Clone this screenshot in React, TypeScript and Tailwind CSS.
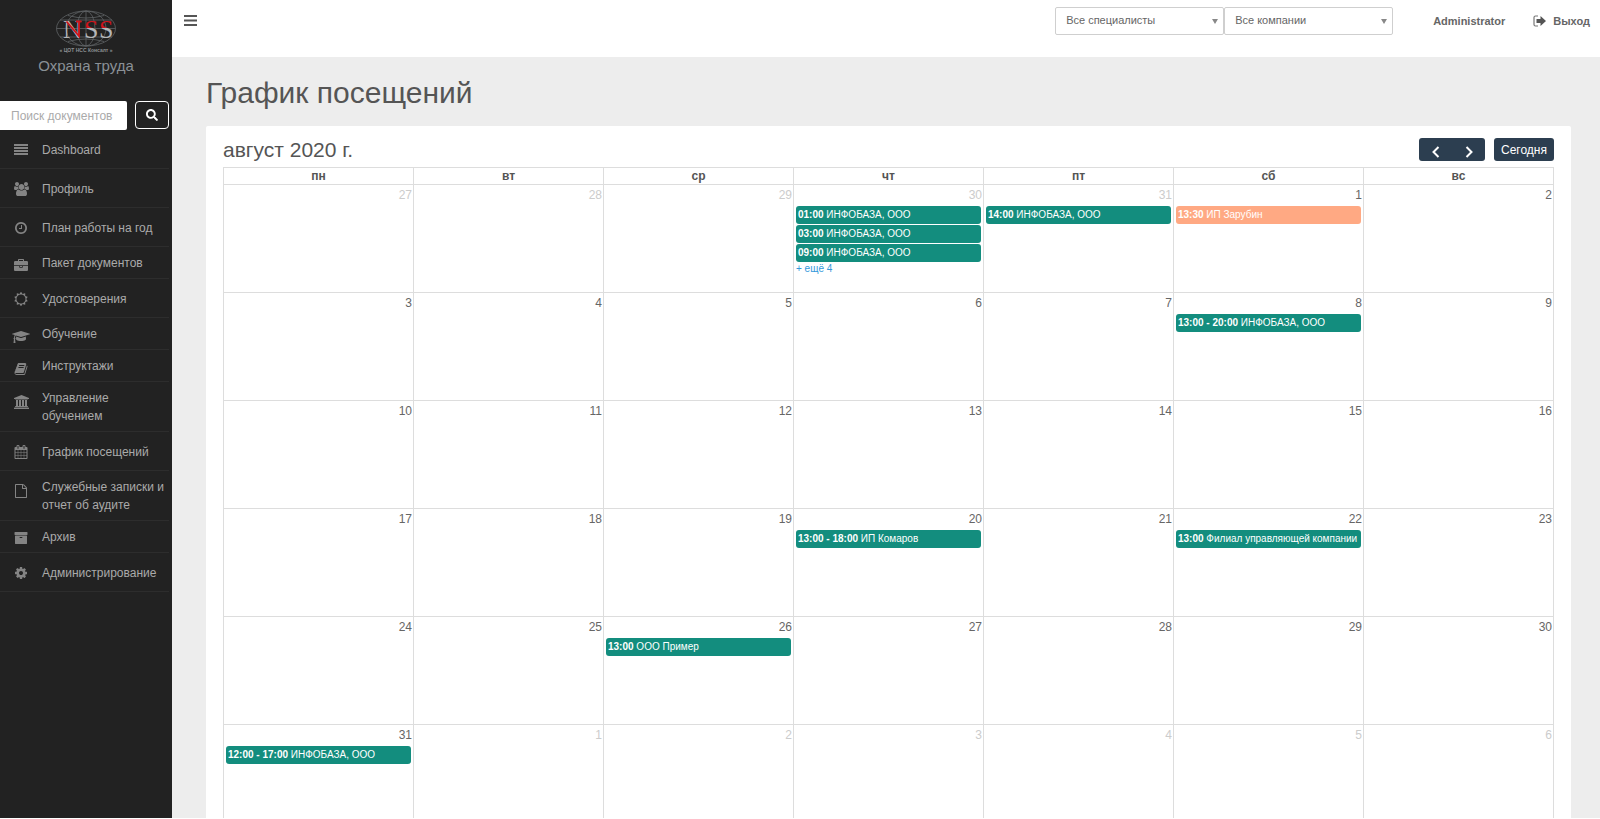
import { useState } from "react";
import { FaSearch } from "react-icons/fa";

type Icon = { w: number; d: string };

const icons: Record<string, Icon> = {
  lines: { w: 1792, d: "M0 128h1792v256h-1792zM0 512h1792v256h-1792zM0 896h1792v256h-1792zM0 1280h1792v256h-1792z" },
  users: { w: 1920, d: "M593 896q-162 5-265 128h-134q-82 0-138-40.5t-56-118.5q0-353 124-353 6 0 43.5 21t97.5 42.5 119 21.5q67 0 133-23-5 37-5 66 0 139 81 256zm1071 637q0 120-73 189.5t-194 69.5h-874q-121 0-194-69.5t-73-189.5q0-53 3.5-103.5t14-109 26.5-108.5 43-97.5 62-81 85.5-53.5 111.5-20q10 0 43 21.5t73 48 107 48 135 21.5 135-21.5 107-48 73-48 43-21.5q61 0 111.5 20t85.5 53.5 62 81 43 97.5 26.5 108.5 14 109 3.5 103.5zm-1024-1277q0 106-75 181t-181 75-181-75-75-181 75-181 181-75 181 75 75 181zm704 384q0 159-112.5 271.5t-271.5 112.5-271.5-112.5-112.5-271.5 112.5-271.5 271.5-112.5 271.5 112.5 112.5 271.5zm576 225q0 78-56 118.5t-138 40.5h-134q-103-123-265-128 81-117 81-256 0-29-5-66 66 23 133 23 59 0 119-21.5t97.5-42.5 43.5-21q124 0 124 353zm-128-609q0 106-75 181t-181 75-181-75-75-181 75-181 181-75 181 75 75 181z" },
  clock: { w: 1792, d: "M1024 544v448q0 14-9 23t-23 9h-320q-14 0-23-9t-9-23v-64q0-14 9-23t23-9h224v-352q0-14 9-23t23-9h64q14 0 23 9t9 23zm416 352q0-148-73-273t-198-198-273-73-273 73-198 198-73 273 73 273 198 198 273 73 273-73 198-198 73-273zm224 0q0 209-103 385.5t-279.5 279.5-385.5 103-385.5-103-279.5-279.5-103-385.5 103-385.5 279.5-279.5 385.5-103 385.5 103 279.5 279.5 103 385.5z" },
  briefcase: { w: 1792, d: "M640 256h512v-128h-512v128zm1152 640v480q0 66-47 113t-113 47h-1472q-66 0-113-47t-47-113v-480h672v160q0 26 19 45t45 19h320q26 0 45-19t19-45v-160h672zm-768 0v128h-256v-128h256zm768-480v384h-1792v-384q0-66 47-113t113-47h352v-160q0-40 28-68t68-28h576q40 0 68 28t28 68v160h352q66 0 113 47t47 113z" },
  sun: { w: 1792, d: "M1472 896q0-117-45.5-223.5t-123-184-184-123-223.5-45.5-223.5 45.5-184 123-123 184-45.5 223.5 45.5 223.5 123 184 184 123 223.5 45.5 223.5-45.5 184-123 123-184 45.5-223.5zm276 277q-4 15-20 20l-292 96v306q0 16-13 26-15 10-29 4l-292-94-180 248q-10 13-26 13t-26-13l-180-248-292 94q-14 6-29-4-13-10-13-26v-306l-292-96q-16-5-20-20-5-17 4-29l180-248-180-248q-9-13-4-29 4-15 20-20l292-96v-306q0-16 13-26 15-10 29-4l292 94 180-248q9-12 26-12t26 12l180 248 292-94q14-6 29 4 13 10 13 26v306l292 96q16 5 20 20 5 16-4 29l-180 248 180 248q9 12 4 29z" },
  cap: { w: 2304, d: "M1774 836l18 316q4 69-82 128t-235 93.5-323 34.5-323-34.5-235-93.5-82-128l18-316 574 181q22 7 48 7t48-7zm530-324q0 23-22 31l-1120 352q-4 1-10 1t-10-1l-652-206q-43 34-71 111.5t-34 178.5q63 36 63 109 0 69-58 107l58 433q2 14-8 25-9 11-24 11h-192q-15 0-24-11-10-11-8-25l58-433q-58-38-58-107 0-73 65-111 11-207 98-330l-333-104q-22-8-22-31t22-31l1120-352q4-1 10-1t10 1l1120 352q22 8 22 31z" },
  book: { w: 1792, d: "M1703 478q40 57 18 129l-275 906q-19 64-76.5 107.5t-122.5 43.5h-923q-77 0-148.5-53.5t-99.5-131.5q-24-67-2-127 0-4 3-27t4-37q1-8-3-21.5t-3-19.5q2-11 8-21t16.5-23.5 16.5-23.5q23-38 45-91.5t30-91.5q3-10 .5-30t-.5-28q3-11 17-28t17-23q21-36 42-92t25-90q1-9-2.5-32t.5-28q4-13 22-30.5t22-22.5q19-26 42.5-84.5t27.5-96.5q1-8-3-25.5t-2-26.5q2-8 9-18t18-23 17-21q8-12 16.5-30.5t15-35 16-36 19.5-32 26.5-23.5 36-11.5 47.5 5.5l-1 3q38-9 51-9h761q74 0 114 56t18 130l-274 906q-36 119-71.5 153.5t-128.5 34.5h-869q-27 0-38 15-11 16-1 43 24 70 144 70h923q29 0 56-15.5t35-41.5l300-987q7-22 5-57 38 15 59 43zm-1064 2q-4 13 2 22.5t20 9.5h608q13 0 25.5-9.5t16.5-22.5l21-64q4-13-2-22.5t-20-9.5h-608q-13 0-25.5 9.5t-16.5 22.5zm-83 256q-4 13 2 22.5t20 9.5h608q13 0 25.5-9.5t16.5-22.5l21-64q4-13-2-22.5t-20-9.5h-608q-13 0-25.5 9.5t-16.5 22.5z" },
  university: { w: 1920, d: "M960 0l960 384v128h-128q0 26-20.5 45t-48.5 19h-1526q-28 0-48.5-19t-20.5-45h-128v-128zm-704 640h256v768h128v-768h256v768h128v-768h256v768h128v-768h256v768h59q28 0 48.5 19t20.5 45v64h-1664v-64q0-26 20.5-45t48.5-19h59v-768zm1595 960q28 0 48.5 19t20.5 45v128h-1920v-128q0-26 20.5-45t48.5-19h1782z" },
  calendar: { w: 1792, d: "M192 1664h288v-288h-288v288zm352 0h320v-288h-320v288zm-352-352h288v-320h-288v320zm352 0h320v-320h-320v320zm-352-384h288v-288h-288v288zm736 736h320v-288h-320v288zm-384-736h320v-288h-320v288zm768 736h288v-288h-288v288zm-384-352h320v-320h-320v320zm-352-864v-288q0-13-9.5-22.5t-22.5-9.5h-64q-13 0-22.5 9.5t-9.5 22.5v288q0 13 9.5 22.5t22.5 9.5h64q13 0 22.5-9.5t9.5-22.5zm736 864h288v-320h-288v320zm-384-384h320v-288h-320v288zm384 0h288v-288h-288v288zm32-480v-288q0-13-9.5-22.5t-22.5-9.5h-64q-13 0-22.5 9.5t-9.5 22.5v288q0 13 9.5 22.5t22.5 9.5h64q13 0 22.5-9.5t9.5-22.5zm384-64v1280q0 52-38 90t-90 38h-1408q-52 0-90-38t-38-90v-1280q0-52 38-90t90-38h128v-96q0-66 47-113t113-47h64q66 0 113 47t47 113v96h384v-96q0-66 47-113t113-47h64q66 0 113 47t47 113v96h128q52 0 90 38t38 90z" },
  file: { w: 1792, d: "M1596 380q28 28 48 76t20 88v1152q0 40-28 68t-68 28h-1344q-40 0-68-28t-28-68v-1600q0-40 28-68t68-28h896q40 0 88 20t76 48zm-444-244v376h376q-10-29-22-41l-313-313q-12-12-41-22zm384 1528v-1024h-416q-40 0-68-28t-28-68v-416h-768v1536h1280z" },
  archive: { w: 1792, d: "M1088 832q0-26-19-45t-45-19h-256q-26 0-45 19t-19 45 19 45 45 19h256q26 0 45-19t19-45zm576-192v960q0 26-19 45t-45 19h-1408q-26 0-45-19t-19-45v-960q0-26 19-45t45-19h1408q26 0 45 19t19 45zm64-448v256q0 26-19 45t-45 19h-1536q-26 0-45-19t-19-45v-256q0-26 19-45t45-19h1536q26 0 45 19t19 45z" },
  cog: { w: 1792, d: "M1152 896q0-106-75-181t-181-75-181 75-75 181 75 181 181 75 181-75 75-181zm512-109v222q0 12-8 23t-20 13l-185 28q-19 54-39 91 35 50 107 138 10 12 10 25t-9 23q-27 37-99 108t-94 71q-12 0-26-9l-138-108q-44 23-91 38-16 136-29 186-7 28-36 28h-222q-14 0-24.5-8.5t-11.5-21.5l-28-184q-49-16-90-37l-141 107q-10 9-25 9-14 0-25-11-126-114-165-168-7-10-7-23 0-12 8-23 15-21 51-66.5t54-70.5q-27-50-41-99l-183-27q-13-2-21-12.5t-8-23.5v-222q0-12 8-23t19-13l186-28q14-46 39-92-40-57-107-138-10-12-10-24 0-10 9-23 26-36 98.5-107.5t94.5-71.5q13 0 26 10l138 107q44-23 91-38 16-136 29-186 7-28 36-28h222q14 0 24.5 8.5t11.5 21.5l28 184q49 16 90 37l142-107q9-9 24-9 13 0 25 10 129 119 165 170 7 8 7 22 0 12-8 23-15 21-51 66.5t-54 70.5q26 50 41 98l183 28q13 2 21 12.5t8 23.5z" },
};

const menu = [
  { icon: "lines",      nom: "Dashboard",                         row: "h-[39px]",  mark: "pt-px" },
  { icon: "users",      nom: "Профиль",                           row: "h-[39px]",  mark: "pt-px" },
  { icon: "clock",      nom: "План работы на год",                row: "h-[39px]",  mark: "pt-px" },
  { icon: "briefcase",  nom: "Пакет документов",                  row: "h-8",       mark: "pt-[6px]" },
  { icon: "sun",        nom: "Удостоверения",                     row: "h-[39px]",  mark: "pt-px" },
  { icon: "cap",        nom: "Обучение",                          row: "h-8",       mark: "pt-[6px]" },
  { icon: "book",       nom: "Инструктажи",                       row: "h-8",       mark: "pt-[6px]" },
  { icon: "university", nom: "Управление обучением",              row: "h-[50px]",  mark: "pb-[10px]" },
  { icon: "calendar",   nom: "График посещений",                  row: "h-[39px]",  mark: "pt-px" },
  { icon: "file",       nom: "Служебные записки и отчет об аудите", row: "h-[50px]", mark: "pb-[10px]" },
  { icon: "archive",    nom: "Архив",                             row: "h-8",       mark: "pt-px" },
  { icon: "cog",        nom: "Администрирование",                 row: "h-[39px]",  mark: "pt-px" },
];

const days = ["пн", "вт", "ср", "чт", "пт", "сб", "вс"];

const weeks = [
  [27, 28, 29, 30, 31, 1, 2],
  [3, 4, 5, 6, 7, 8, 9],
  [10, 11, 12, 13, 14, 15, 16],
  [17, 18, 19, 20, 21, 22, 23],
  [24, 25, 26, 27, 28, 29, 30],
  [31, 1, 2, 3, 4, 5, 6],
];

type Visit = { time: string; title: string; orange?: boolean };

// key: "week-day"
const visits: Record<string, Visit[]> = {
  "0-3": [
    { time: "01:00", title: "ИНФОБАЗА, ООО" },
    { time: "03:00", title: "ИНФОБАЗА, ООО" },
    { time: "09:00", title: "ИНФОБАЗА, ООО" },
  ],
  "0-4": [{ time: "14:00", title: "ИНФОБАЗА, ООО" }],
  "0-5": [{ time: "13:30", title: "ИП Зарубин", orange: true }],
  "1-5": [{ time: "13:00 - 20:00", title: "ИНФОБАЗА, ООО" }],
  "3-3": [{ time: "13:00 - 18:00", title: "ИП Комаров" }],
  "3-5": [{ time: "13:00", title: "Филиал управляющей компании" }],
  "4-2": [{ time: "13:00", title: "ООО Пример" }],
  "5-0": [{ time: "12:00 - 17:00", title: "ИНФОБАЗА, ООО" }],
};

const more: Record<string, string> = { "0-3": "+ ещё 4" };

function MenuIcon({ name }: { name: string }) {
  const { w, d } = icons[name];
  return (
    <svg viewBox={`0 0 ${w} 1792`} height="14" width={(w * 14) / 1792} fill="currentColor" aria-hidden="true">
      <path d={d} />
    </svg>
  );
}

function Logo() {
  return (
    <svg viewBox="0 0 64 44" className="w-16 h-11" aria-hidden="true">
      <defs>
        <linearGradient id="nss" gradientUnits="userSpaceOnUse" x1="0" y1="11" x2="0" y2="28">
          <stop offset="0.42" stopColor="#d0141c" />
          <stop offset="0.42" stopColor="#b4b7b9" />
        </linearGradient>
      </defs>
      <g fill="none" stroke="#5f6366" strokeWidth="0.8">
        <ellipse cx="32" cy="18.5" rx="29.5" ry="17.5" />
        <ellipse cx="32" cy="18.5" rx="20" ry="17.5" />
        <ellipse cx="32" cy="18.5" rx="9" ry="17.5" />
        <path d="M32 1v35M2.5 18.5h59M6 10h52M6 27h52M14 5.500q18 5 36 0M14 31.500q18-5 36 0" />
      </g>
      <g fontFamily="Liberation Serif, serif" fontSize="26" fill="url(#nss)">
        <text x="9" y="28" fill="#b4b7b9">N</text>
        <text x="30" y="28">S</text>
        <text x="45" y="28">S</text>
      </g>
      {/* red diagonal of the N */}
      <path d="M12.500 11.500L25 26V12M22 11.500h5.500" fill="none" stroke="#d0141c" strokeWidth="1.800" />
      <text x="32" y="42" textAnchor="middle" fontFamily="Liberation Sans, sans-serif" fontWeight="700" fontSize="5" fill="#8d9194">« ЦОТ НСС Консалт »</text>
    </svg>
  );
}

function Filter({ label }: { label: string }) {
  return (
    <div className="relative w-[169px]">
      <select aria-label={label} className="w-full h-7 pl-[10px] pr-6 pb-[2px] appearance-none rounded-xs border border-[#cfcfcf] bg-white text-[11px] text-[#666]">
        <option>{label}</option>
      </select>
      <svg viewBox="0 0 6 5" className="absolute right-[6px] top-3 w-[6px] h-[5px] pointer-events-none" fill="#888" aria-hidden="true">
        <path d="M0 0h6L3 5z" />
      </svg>
    </div>
  );
}

export default function App() {
  const [query, setQuery] = useState("");

  return (
    <div className="flex h-screen overflow-hidden border-b border-white bg-[#ededed] text-[#555] font-['Liberation_Sans',Arial,sans-serif]">
      {/* Sidebar */}
      <aside className="w-[172px] shrink-0 bg-[#222]">
        <div className="flex flex-col items-center pt-[10px] h-[101px] text-[#8a9096]">
          <Logo />
          <p className="text-[15px] leading-6">Охрана труда</p>
        </div>
        <form className="flex justify-between pr-[3px]" onSubmit={e => e.preventDefault()}>
          <input type="text" aria-label="Поиск документов" placeholder="Поиск документов" value={query} onChange={e => setQuery(e.target.value)}
            className="w-[127px] h-[29px] pl-[11px] rounded-r-xs bg-white text-xs text-[#555] placeholder:text-[#aaa] outline-none" />
          <button aria-label="Найти" className="w-[34px] h-7 flex items-center justify-center rounded border border-white text-white">
            <FaSearch size={12} />
          </button>
        </form>
        <nav className="pr-[3px]">
          {menu.map(m => (
            <a key={m.nom} href="#" className={`flex items-center border-b border-[#2d2d2d] pt-px text-xs leading-[18px] text-[#aaa] ${m.row}`}>
              <span className={`w-[42px] shrink-0 flex justify-center text-[#848484] ${m.mark}`}>
                <MenuIcon name={m.icon} />
              </span>
              {m.nom}
            </a>
          ))}
        </nav>
      </aside>

      <div className="flex-1 min-w-0">
        {/* Top bar */}
        <header className="flex items-start justify-between h-[57px] bg-white pl-3 pr-[10px] pt-[7px]">
          <button aria-label="Меню" className="mt-2">
            <svg viewBox="0 0 13 11" className="w-[13px] h-[11px]" fill="#555" aria-hidden="true">
              <path d="M0 0h13v2H0zM0 4.500h13v2H0zM0 9h13v2H0z" />
            </svg>
          </button>
          <div className="flex text-[11px] font-bold text-[#666]">
            <div className="flex font-normal">
              <Filter label="Все специалисты" />
              <Filter label="Все компании" />
            </div>
            <a href="#" className="h-7 flex items-center ml-10">Administrator</a>
            <a href="#" className="h-7 flex items-center gap-[7px] ml-7">
              <svg viewBox="0 0 13 12" className="w-[13px] h-3" aria-hidden="true">
                <path d="M5 1H2.500Q1 1 1 2.500v7Q1 11 2.500 11H5" fill="none" stroke="#777" strokeWidth="1.200" />
                <path d="M3.500 4h4V1L13 6l-5.500 5V8h-4z" fill="#555" />
              </svg>
              Выход
            </a>
          </div>
        </header>

        <main className="pl-[34px] pr-[29px]">
          <h1 className="pt-4 pb-[13px] text-[30px] leading-10">График посещений</h1>

          {/* Calendar */}
          <section className="rounded-t-xs bg-white px-[17px] pt-3">
            <div className="flex items-center justify-between pb-[6px]">
              <h2 className="text-[21px] leading-[23px]">август 2020 г.</h2>
              <div className="flex gap-[9px] text-white">
                <div className="flex rounded-[3px] bg-[#2c3e50]">
                  <button aria-label="Предыдущий месяц" className="w-[33px] h-[23px] pt-1 flex items-center justify-center">
                    <svg viewBox="0 0 8 12" className="w-2 h-3" fill="none" stroke="currentColor" strokeWidth="2" aria-hidden="true"><path d="M6.500 1l-5 5 5 5" /></svg>
                  </button>
                  <button aria-label="Следующий месяц" className="w-[33px] h-[23px] pt-1 flex items-center justify-center">
                    <svg viewBox="0 0 8 12" className="w-2 h-3" fill="none" stroke="currentColor" strokeWidth="2" aria-hidden="true"><path d="M1.500 1l5 5-5 5" /></svg>
                  </button>
                </div>
                <button className="h-[23px] px-[7px] rounded-[3px] bg-[#2c3e50] text-xs">Сегодня</button>
              </div>
            </div>
            <table className="w-full table-fixed border-collapse">
              <thead>
                <tr>
                  {days.map(d => (
                    <th key={d} className="h-[17px] border border-[#ddd] p-0 text-xs leading-4">{d}</th>
                  ))}
                </tr>
              </thead>
              <tbody>
                {weeks.map((week, w) => (
                  <tr key={w}>
                    {week.map((n, d) => {
                      const key = `${w}-${d}`;
                      const other = (w === 0 && n > 7) || (w === 5 && n < 7);
                      return (
                        <td key={key} className="h-[108px] border border-[#ddd] p-0 align-top">
                          <p className={`pr-px pt-[2px] text-right text-xs leading-4 ${other ? "text-[#ccc]" : "text-[#666]"}`}>{n}</p>
                          <div className="flex flex-col gap-px mx-[2px] mt-[3px]">
                            {visits[key]?.map(v => (
                              <a key={v.time} href="#"
                                className={`block px-[2px] rounded-[3px] text-[10px] leading-[18px] text-white whitespace-nowrap overflow-hidden ${v.orange ? "bg-[#ffa983]" : "bg-[#138d7e]"}`}>
                                <b>{v.time}</b> {v.title}
                              </a>
                            ))}
                            {more[key] && <a href="#" className="text-[10px] leading-3 text-[#3498db]">{more[key]}</a>}
                          </div>
                        </td>
                      );
                    })}
                  </tr>
                ))}
              </tbody>
            </table>
          </section>
        </main>
      </div>
    </div>
  );
}
